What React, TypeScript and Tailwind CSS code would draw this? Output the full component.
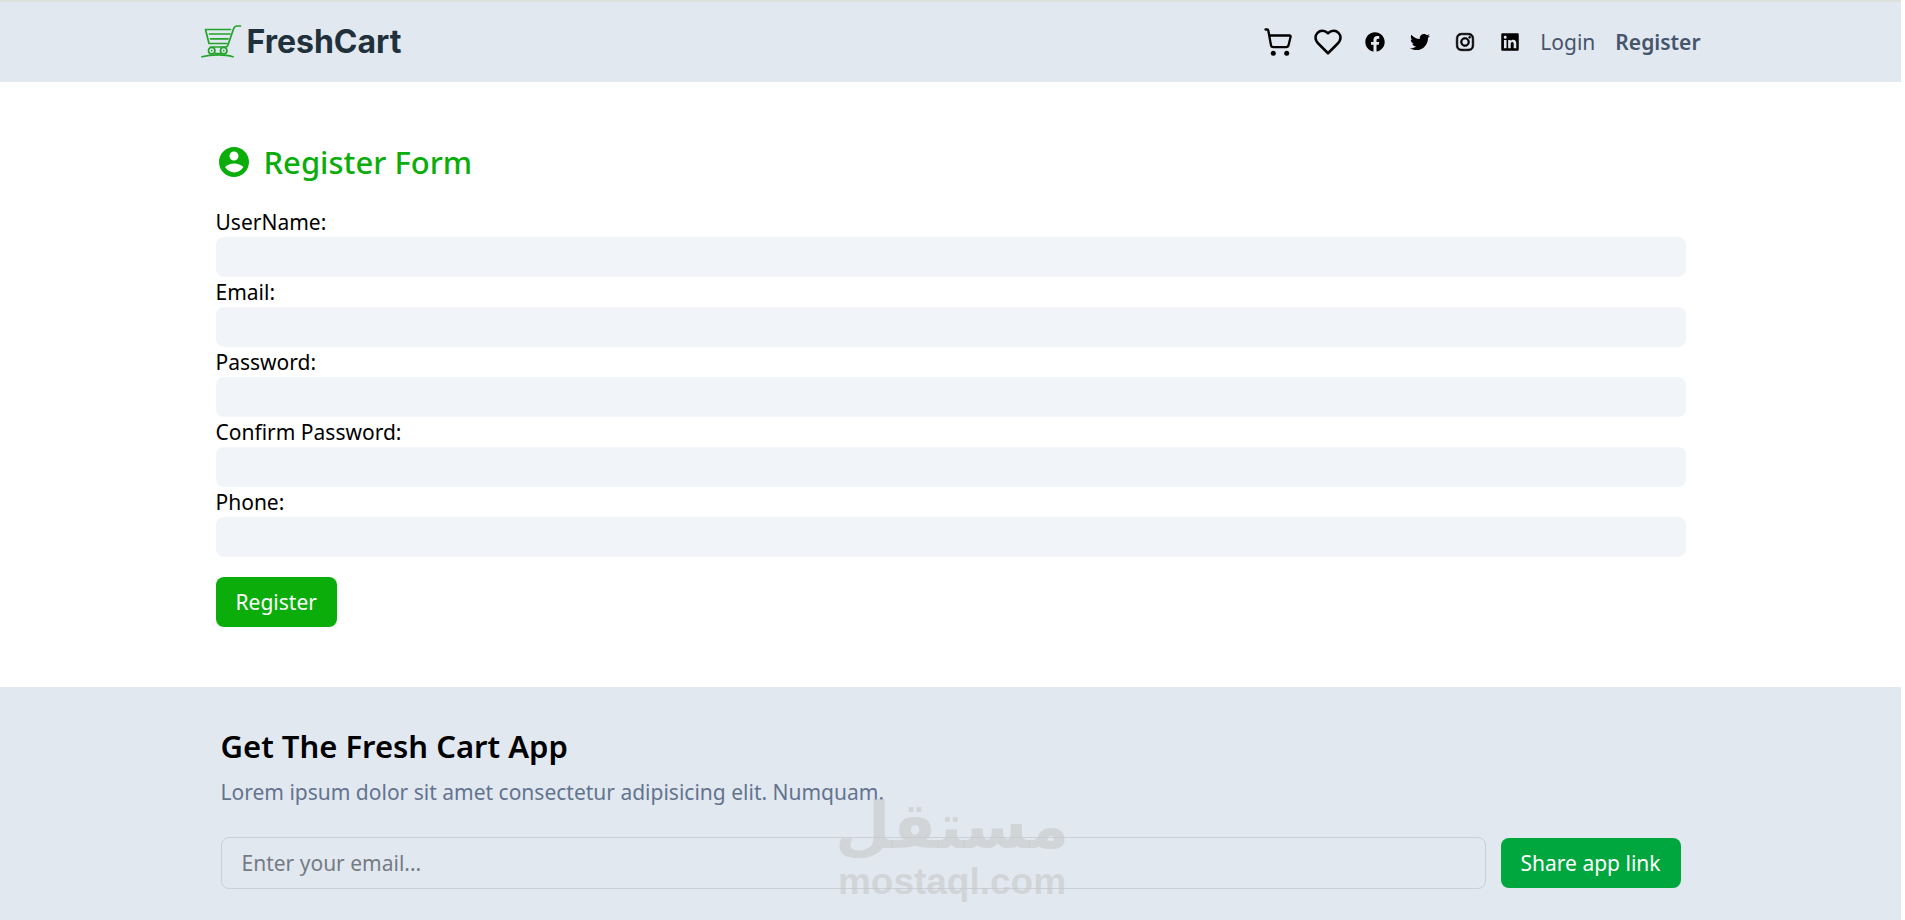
import { FaFacebook, FaInstagram, FaLinkedin, FaTwitter } from "react-icons/fa";
import { RiAccountCircleFill } from "react-icons/ri";

const socials = [
  { name: "Facebook", icon: <FaFacebook className="size-5" /> },
  { name: "Twitter", icon: <FaTwitter className="size-5" /> },
  {
    name: "Instagram",
    icon: <FaInstagram className="size-5" strokeWidth={16} />,
  },
  { name: "LinkedIn", icon: <FaLinkedin className="size-5" /> },
];

const fields = [
  { id: "name", label: "UserName:", type: "text" },
  { id: "email", label: "Email:", type: "email" },
  { id: "password", label: "Password:", type: "password" },
  { id: "rePassword", label: "Confirm Password:", type: "password" },
  { id: "phone", label: "Phone:", type: "tel" },
];

function Logo() {
  return (
    <a href="#" className="flex items-center gap-1 text-[#21313c]">
      <svg
        viewBox="0 0 42 36"
        className="h-9 w-[42px]"
        fill="none"
        stroke="#22a32a"
        strokeWidth="1.7"
        strokeLinecap="round"
        strokeLinejoin="round"
      >
        <path d="M29.5 5.5H4.500L8 19.500h18" />
        <path d="M39.500 2H36c-2 0-2.800 1-3.500 3L27 21c-.5 1.500-1 2-2.500 2H9.500" />
        <path d="M8.500 10h20.500M9.500 14.800h17.500" />
        <circle cx="10.700" cy="26.700" r="3.200" />
        <circle cx="22.700" cy="26.700" r="3.200" />
        <path d="M10.700 26.700h.01M22.700 26.700h.01M14.500 29.500h4.500" />
        <path d="M1 32.800c9-2.500 23-2.500 31 0" />
      </svg>
      <span className="font-[Inter] text-[32px] leading-none font-bold">
        FreshCart
      </span>
    </a>
  );
}

function CartIcon() {
  return (
    <svg
      viewBox="0 0 30 30"
      className="size-[30px]"
      fill="none"
      stroke="currentColor"
      strokeWidth="2.300"
      strokeLinecap="round"
      strokeLinejoin="round"
    >
      <path d="M2.500 2.500h1.600a1.200 1.200 0 0 1 1.200 1L8 18.200a2.300 2.300 0 0 0 2.300 1.900h12.900a2.500 2.500 0 0 0 2.400-2L27.600 9.700a1 1 0 0 0-1-1.200H6.200" />
      <circle cx="10.300" cy="26.200" r="2.500" fill="currentColor" stroke="none" />
      <circle cx="23.700" cy="26.200" r="2.500" fill="currentColor" stroke="none" />
    </svg>
  );
}

function HeartIcon() {
  return (
    <svg
      viewBox="0 0 24 24"
      className="size-[30px]"
      fill="none"
      stroke="currentColor"
      strokeWidth="2"
      strokeLinecap="round"
      strokeLinejoin="round"
    >
      <path d="M19 14c1.490-1.460 3-3.210 3-5.500A5.500 5.500 0 0 0 16.500 3c-1.760 0-3 .5-4.500 2-1.500-1.500-2.740-2-4.500-2A5.500 5.500 0 0 0 2 8.500c0 2.300 1.500 4.050 3 5.500l7 7Z" />
    </svg>
  );
}

function Navbar() {
  return (
    <header className="border-t-2 border-[#dde1de] bg-[#e2e8f0]">
      <nav className="mx-auto flex h-20 max-w-[1500px] items-center justify-between">
        <Logo />
        <div className="flex items-center gap-5">
          <a href="#" aria-label="Cart">
            <CartIcon />
          </a>
          <a href="#" aria-label="Wishlist">
            <HeartIcon />
          </a>
          <ul className="ml-0.5 flex items-center gap-[25px]">
            {socials.map((s) => (
              <li key={s.name}>
                <a href="#" aria-label={s.name}>
                  {s.icon}
                </a>
              </li>
            ))}
          </ul>
          <a href="#" className="text-[#45556c]">
            Login
          </a>
          <a href="#" className="font-semibold text-[#45556c]">
            Register
          </a>
        </div>
      </nav>
    </header>
  );
}

function RegisterForm() {
  return (
    <main className="mx-auto w-full max-w-[1500px] px-[15px] py-[60px]">
      <h1 className="mb-[25px] flex items-center gap-3 text-[31px] leading-10 font-medium text-[#0aad0a]">
        <RiAccountCircleFill className="size-9" />
        Register Form
      </h1>
      <form onSubmit={(e) => e.preventDefault()}>
        {fields.map((f) => (
          <div key={f.id}>
            <label htmlFor={f.id} className="block">
              {f.label}
            </label>
            <input
              id={f.id}
              type={f.type}
              className="block h-10 w-full rounded-lg bg-[#f1f5f9] px-3 outline-none"
            />
          </div>
        ))}
        <button
          type="submit"
          className="mt-5 h-[50px] rounded-lg bg-[#0aad0a] px-5 text-white"
        >
          Register
        </button>
      </form>
    </main>
  );
}

function Watermark() {
  return (
    <svg
      viewBox="0 0 240 145"
      className="pointer-events-none absolute top-[78px] left-1/2 h-[145px] w-[240px] -translate-x-1/2 text-[#c8c8c8]/60"
      fill="currentColor"
      textAnchor="middle"
      fontWeight="700"
      aria-hidden="true"
    >
      <text x="121" y="83" fontSize="64" className="font-['DejaVu_Sans']">
        مستقل
      </text>
      <text x="121" y="129" fontSize="37" className="font-['Liberation_Sans']">
        mostaql.com
      </text>
    </svg>
  );
}

function Footer() {
  return (
    <footer className="relative grow bg-[#e2e8f0]">
      <div className="mx-auto max-w-[1500px] px-5 pt-10">
        <h2 className="text-[31px] leading-[38px] font-semibold">
          Get The Fresh Cart App
        </h2>
        <p className="mt-3 text-[#62748e]">
          Lorem ipsum dolor sit amet consectetur adipisicing elit. Numquam.
        </p>
        <form
          className="mt-[30px] flex items-center gap-[15px]"
          onSubmit={(e) => e.preventDefault()}
        >
          <input
            type="email"
            aria-label="Email"
            placeholder="Enter your email..."
            className="h-[52px] min-w-0 grow rounded-lg border border-[#cad0d8] px-5 outline-none placeholder:text-[#757b84]"
          />
          <button
            type="submit"
            className="h-[50px] rounded-lg bg-[#00a63e] px-5 text-white"
          >
            Share app link
          </button>
        </form>
      </div>
      <Watermark />
    </footer>
  );
}

export default function App() {
  return (
    <div className="flex min-h-screen flex-col bg-white pr-1 font-['Noto_Sans',sans-serif] text-[21px] leading-[30px] text-black">
      <Navbar />
      <RegisterForm />
      <Footer />
    </div>
  );
}
